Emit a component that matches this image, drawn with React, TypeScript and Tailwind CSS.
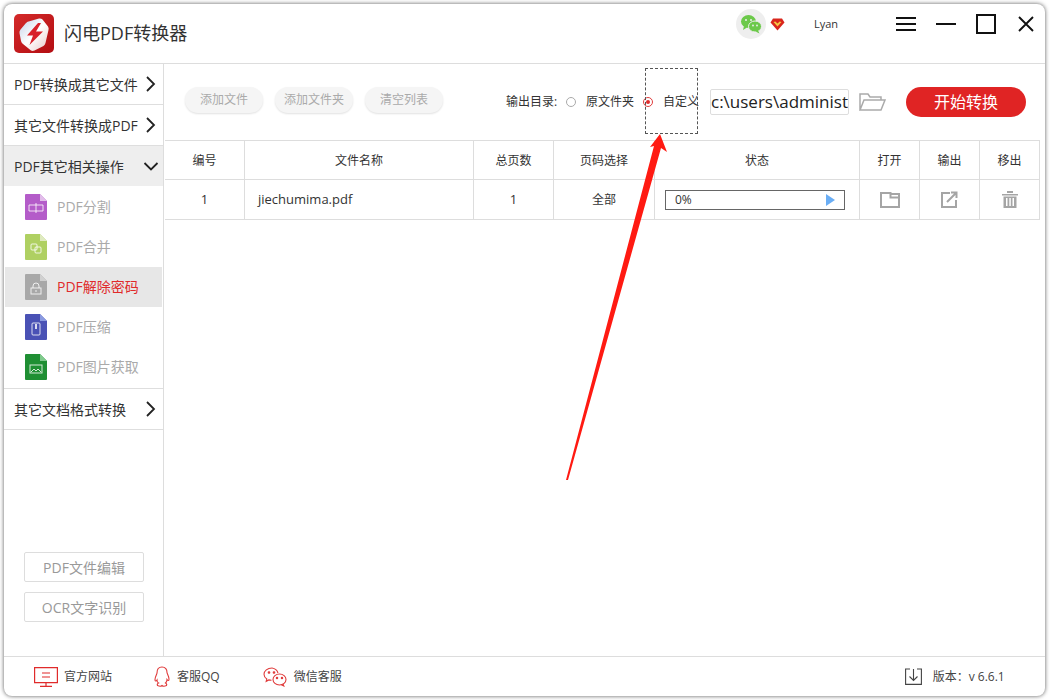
import React from "react";

const font = { fontFamily: '"Open Sans","Noto Sans CJK SC",sans-serif' };

function Chevron({ down = false }: { down?: boolean }) {
  return (
    <svg width="16" height="16" viewBox="0 0 16 16" fill="none" stroke="#222" strokeWidth="1.800">
      {down ? <path d="M1.500 5l6.500 6.500L14.500 5" /> : <path d="M4 1l7 7-7 7" />}
    </svg>
  );
}

function MenuRow({ label, down, active }: { label: string; down?: boolean; active?: boolean }) {
  return (
    <div className={`flex items-center justify-between pl-[10px] pr-[4px] ${active ? "bg-[#eeeeee] h-[40px]" : "h-[41px] border-b border-[#dedede]"}`}>
      <span className="text-[14px] text-[#333] whitespace-nowrap">{label}</span>
      <Chevron down={down} />
    </div>
  );
}

function FileIcon({ bg, fold, children }: { bg: string; fold: string; children: React.ReactNode }) {
  return (
    <svg width="22" height="26" viewBox="0 0 22 26">
      <path d="M1 0h14l7 7v18a1 1 0 0 1-1 1H1a1 1 0 0 1-1-1V1a1 1 0 0 1 1-1z" fill={bg} />
      <path d="M15 0l7 7h-7z" fill={fold} />
      <g fill="none" stroke="#fff" strokeOpacity="0.8" strokeWidth="1">{children}</g>
    </svg>
  );
}

function SubRow({ label, icon, active }: { label: string; icon: React.ReactNode; active?: boolean }) {
  return (
    <div className={`h-[40px] flex items-center gap-[10px] mr-px ${active ? "bg-[#e7e7e7] ml-px pl-[20px]" : "pl-[21px]"}`}>
      {icon}
      <span className={`text-[14px] pb-[2px] whitespace-nowrap ${active ? "text-[#e02b2b]" : "text-[#aaaaaa]"}`}>{label}</span>
    </div>
  );
}

function ToolBtn({ label }: { label: string }) {
  return (
    <div className="w-[78px] h-[26px] rounded-full bg-[#f5f5f5] shadow-[0_1px_2px_rgba(0,0,0,0.12)] flex items-center justify-center text-[12px] text-[#aaaaaa]">
      {label}
    </div>
  );
}

function Cell({ children, h }: { children: React.ReactNode; h?: boolean }) {
  return (
    <div className={`flex items-center justify-center border-r border-b border-[#dddddd] text-[12px] text-[#333] ${h ? "h-[39px] pt-[2px]" : "h-[40px]"}`}>
      {children}
    </div>
  );
}

function Radio({ on }: { on?: boolean }) {
  return (
    <span className={`w-[10px] h-[10px] rounded-full flex items-center justify-center ${on ? "border-[1.500px] border-[#e03b3b]" : "border border-[#aaaaaa]"}`}>
      {on && <span className="w-[4px] h-[4px] rounded-full bg-[#e02b2b]" />}
    </span>
  );
}

export default function App() {
  return (
    <div className="w-[1050px] h-[700px] bg-white p-[4px] relative overflow-hidden" style={font}>
      <div className="w-[1041px] h-[692px] bg-white rounded-[8px] shadow-[0_0_4px_rgba(0,0,0,0.65)] flex flex-col overflow-hidden">
        {/* title bar */}
        <div className="h-[60px] shrink-0 border-b border-[#dddddd] flex items-center">
          <svg className="ml-[10px]" width="40" height="40" viewBox="0 0 40 40">
            <defs>
              <linearGradient id="lg" x1="0" y1="0" x2="1" y2="1">
                <stop offset="0" stopColor="#d42a2a" />
                <stop offset="1" stopColor="#b30d12" />
              </linearGradient>
              <linearGradient id="lw" x1="0" y1="0" x2="1" y2="1">
                <stop offset="0" stopColor="#c4d0e8" />
                <stop offset="0.5" stopColor="#ffffff" />
                <stop offset="1" stopColor="#e8c8c8" />
              </linearGradient>
            </defs>
            <rect width="40" height="39" rx="5" fill="url(#lg)" />
            <path d="M12 9q1.500-1.500 3.500-1.800L25 4.500q2-.4 3.500 1l5.500 7q1 1.500.5 3.500l-3 13q-.5 2-2 3l-9 4.500q-2 .8-3.500 0L9 30q-1.500-1-2-3L5.500 19q-.3-2 1-3.500z" fill="url(#lw)" />
            <path d="M24 9L13 21.500h6L15.500 31 29 17.500h-7L27 9z" fill="#d8202a" />
          </svg>
          <span className="ml-[10px] text-[18px] text-[#333] whitespace-nowrap">闪电PDF转换器</span>
          <div className="ml-auto self-start h-[40px] flex items-center">
            <div className="w-[30px] h-[30px] rounded-full bg-[#eeeeee] flex items-center justify-center">
              <svg width="22" height="20" viewBox="0 0 22 20">
                <ellipse cx="8.500" cy="7.500" rx="7.500" ry="6.500" fill="#6cc94a" />
                <path d="M4 12l-1 4 4-2.500z" fill="#6cc94a" />
                <ellipse cx="15" cy="12.500" rx="6.500" ry="5.500" fill="#6cc94a" stroke="#eeeeee" strokeWidth="1" />
                <path d="M18 16.500l1.500 3-4-2z" fill="#6cc94a" />
                <circle cx="6" cy="6" r="1" fill="#eee" />
                <circle cx="11" cy="6" r="1" fill="#eee" />
                <circle cx="13" cy="11.500" r=".9" fill="#eee" />
                <circle cx="17" cy="11.500" r=".9" fill="#eee" />
              </svg>
            </div>
            <svg className="ml-[4px]" width="15" height="13" viewBox="0 0 15 13">
              <path d="M3 .5h9l2.500 4L7.500 12.500.5 4.500z" fill="#d9261c" />
              <path d="M3.500 4l4 4.500 4-4.500-1.800-.5-2.200 2-2.200-2z" fill="#f5c542" />
            </svg>
            <span className="ml-[29px] w-[82px] text-[11px] text-[#333]">Lyan</span>
            <div className="flex flex-col gap-[4px] w-[20px]">
              <span className="h-[2px] bg-[#111] block" />
              <span className="h-[2px] bg-[#111] block" />
              <span className="h-[2px] bg-[#111] block" />
            </div>
            <span className="ml-[20px] w-[20px] h-[2px] bg-[#111] block" />
            <span className="ml-[20px] w-[20px] h-[20px] border-2 border-[#111] block" />
            <svg className="ml-[22px] mr-[11px]" width="16" height="16" viewBox="0 0 16 16" stroke="#111" strokeWidth="1.900">
              <path d="M1 1l14 14M15 1L1 15" />
            </svg>
          </div>
        </div>

        <div className="flex-1 flex min-h-0">
          {/* sidebar */}
          <div className="w-[160px] shrink-0 border-r border-[#dddddd] flex flex-col">
            <MenuRow label="PDF转换成其它文件" />
            <MenuRow label="其它文件转换成PDF" />
            <MenuRow label="PDF其它相关操作" down active />
            <div className="mt-px flex flex-col">
              <SubRow label="PDF分割" icon={<FileIcon bg="#b45cc9" fold="#e2bdea"><path d="M4 11h14v6H4zM11 9v10" /></FileIcon>} />
              <SubRow label="PDF合并" icon={<FileIcon bg="#afd062" fold="#dfeac0"><rect x="6" y="10" width="6" height="6" rx="1" /><rect x="10" y="13" width="6" height="6" rx="1" /></FileIcon>} />
              <SubRow active label="PDF解除密码" icon={<FileIcon bg="#a8a8a8" fold="#d0d0d0"><rect x="6" y="14" width="10" height="6" /><path d="M8 14v-2a3 3 0 0 1 6 0v2M11 16v2" /></FileIcon>} />
              <SubRow label="PDF压缩" icon={<FileIcon bg="#4a52b5" fold="#8a9ae0"><rect x="7" y="9" width="8" height="12" rx="1" /><path d="M11 10v5" strokeWidth="2" /></FileIcon>} />
              <SubRow label="PDF图片获取" icon={<FileIcon bg="#1f8f33" fold="#7fca8c"><rect x="5" y="11" width="12" height="8" /><path d="M6 18l3-3 2 2 2-2 3 3" /></FileIcon>} />
            </div>
            <div className="border-b border-[#dedede] mt-px" />
            <MenuRow label="其它文档格式转换" />
            <div className="mt-auto pb-[34px] pl-[20px] flex flex-col gap-[10px]">
              <div className="w-[120px] h-[30px] rounded-[2px] border border-[#dddddd] flex items-center justify-center text-[14px] text-[#999]">PDF文件编辑</div>
              <div className="w-[120px] h-[30px] rounded-[2px] border border-[#dddddd] flex items-center justify-center text-[14px] text-[#999]">OCR文字识别</div>
            </div>
          </div>

          {/* main */}
          <div className="flex-1 min-w-0 flex flex-col">
            <div className="h-[76px] shrink-0 flex items-center pl-[21px]">
              <div className="flex gap-[12px] -mt-[4px]">
                <ToolBtn label="添加文件" />
                <ToolBtn label="添加文件夹" />
                <ToolBtn label="清空列表" />
              </div>
              <div className="ml-[63px] flex items-center text-[12px] text-[#333] whitespace-nowrap -mt-[1px]">
                <span className="w-[60px]">输出目录:</span>
                <Radio />
                <span className="ml-[10px] w-[57px]">原文件夹</span>
                <Radio on />
                <span className="ml-[10px] w-[47px]">自定义</span>
                <div className="w-[139px] h-[26px] border border-[#dddddd] rounded-[2px] flex items-center overflow-hidden text-[17px] text-[#222]">c:\users\administ</div>
                <svg className="ml-[10px]" width="27" height="18" viewBox="0 0 27 18" fill="none" stroke="#aaaaaa" strokeWidth="1.500">
                  <path d="M1 17V1h8l2 3h11v3M1 17l4-10h21l-4 10z" />
                </svg>
                <div className="ml-[20px] w-[120px] h-[30px] rounded-full bg-[#e02424] text-white text-[16px] flex items-center justify-center">开始转换</div>
              </div>
            </div>
            <div className="ml-px w-[875px] border-t border-[#dddddd] grid grid-cols-[80px_229px_80px_101px_205px_60px_60px_60px]">
              <Cell h>编号</Cell>
              <Cell h>文件名称</Cell>
              <Cell h>总页数</Cell>
              <Cell h>页码选择</Cell>
              <Cell h>状态</Cell>
              <Cell h>打开</Cell>
              <Cell h>输出</Cell>
              <Cell h>移出</Cell>
              <Cell><span className="text-[13px]">1</span></Cell>
              <Cell><span className="w-full pl-[13px] text-[13px]">jiechumima.pdf</span></Cell>
              <Cell><span className="text-[13px]">1</span></Cell>
              <Cell>全部</Cell>
              <Cell>
                <div className="mr-[4px] w-[180px] h-[20px] border border-[#666] flex items-center justify-between pl-[9px] pr-[9px] text-[12px]">
                  <span>0%</span>
                  <svg width="9" height="12" viewBox="0 0 9 12"><path d="M0 0l9 6-9 6z" fill="#6aaef5" /></svg>
                </div>
              </Cell>
              <Cell>
                <svg width="20" height="16" viewBox="0 0 20 16" fill="none" stroke="#a5a5a5" strokeWidth="2"><path d="M1 1h9.500v4.500H19V15H1zM11 2h8v4" /></svg>
              </Cell>
              <Cell>
                <svg width="17" height="17" viewBox="0 0 17 17" fill="none" stroke="#a5a5a5" strokeWidth="2"><path d="M9 2H1v14h14V9M6 11L15 2M10 1.500h5.500V7" /></svg>
              </Cell>
              <Cell>
                <svg width="16" height="17" viewBox="0 0 16 17" fill="#a5a5a5"><path d="M0 3h16v1.500H0zM5 0h6v2H5zM1.500 5.500h13V17h-13zM4 7v8h1.500V7zM7.300 7v8h1.500V7zM10.500 7v8H12V7z" fillRule="evenodd" /></svg>
              </Cell>
            </div>
          </div>
        </div>

        {/* footer */}
        <div className="h-[40px] shrink-0 border-t border-[#dddddd] flex items-center text-[12px] text-[#444] whitespace-nowrap">
          <svg className="ml-[30px]" width="24" height="20" viewBox="0 0 24 20" fill="none" stroke="#e02b2b" strokeWidth="1.200">
            <path d="M.6.600h22.800v15H.600zM12 15.600V19M6 19.400h12M8 6h8M8 10h8" />
          </svg>
          <span className="ml-[6px]">官方网站</span>
          <svg className="ml-[42px]" width="16" height="22" viewBox="0 0 16 22" fill="none" stroke="#e03b3b" strokeWidth="1.100">
            <path d="M8 1c3.500 0 5 2.500 5 5.500 0 1 1.800 3.500 2 6.500.1 1.800-1 2-2 .5 0 1.500-.3 2.500-1.500 3.500 1 .5 1.500 1.500 1 2.500-2 1-4 .5-4.500 0-.5.500-2.500 1-4.500 0-.5-1 0-2 1-2.500C3.300 16.500 3 15.500 3 14c-1 1.500-2.100 1.300-2-.5.200-3 2-5.500 2-6.500C3 3.500 4.500 1 8 1z" />
          </svg>
          <span className="ml-[7px]">客服QQ</span>
          <svg className="ml-[43px]" width="24" height="20" viewBox="0 0 24 20" fill="none" stroke="#e03b3b" strokeWidth="1.100">
            <path d="M9 1C4.500 1 1 3.800 1 7.300c0 2 1 3.500 2.800 4.700l-.6 2.300 2.600-1.400c1 .3 1.500.4 2.700.4" />
            <path d="M15 6c-.8-2.700-3-4.500-6-5" />
            <ellipse cx="16.500" cy="12.500" rx="6.500" ry="5.500" />
            <path d="M20 17l.8 2-2.500-1.200" />
            <circle cx="6" cy="5.500" r=".8" fill="#e03b3b" />
            <circle cx="11" cy="5.500" r=".8" fill="#e03b3b" />
            <circle cx="14" cy="11" r=".7" fill="#e03b3b" />
            <circle cx="19" cy="11" r=".7" fill="#e03b3b" />
          </svg>
          <span className="ml-[7px]">微信客服</span>
          <svg className="ml-[563px]" width="17" height="17" viewBox="0 0 17 17" fill="none" stroke="#444" strokeWidth="1.100">
            <path d="M5 1H.6v15.400h15.800V1H12M8.500 1v11M4.500 8.500l4 4 4-4" />
          </svg>
          <span className="ml-[11px]">版本：v 6.6.1</span>
        </div>
      </div>

      {/* overlay annotation */}
      <div className="absolute left-[645px] top-[68px] w-[53px] h-[66px] border border-dashed border-[#555]" />
      <svg className="absolute left-0 top-0 pointer-events-none" width="1050" height="700" viewBox="0 0 1050 700">
        <path d="M660 134L667 152 661 148 568 480 566 480 654 146 650 147z" fill="#ff1a12" />
      </svg>
    </div>
  );
}
